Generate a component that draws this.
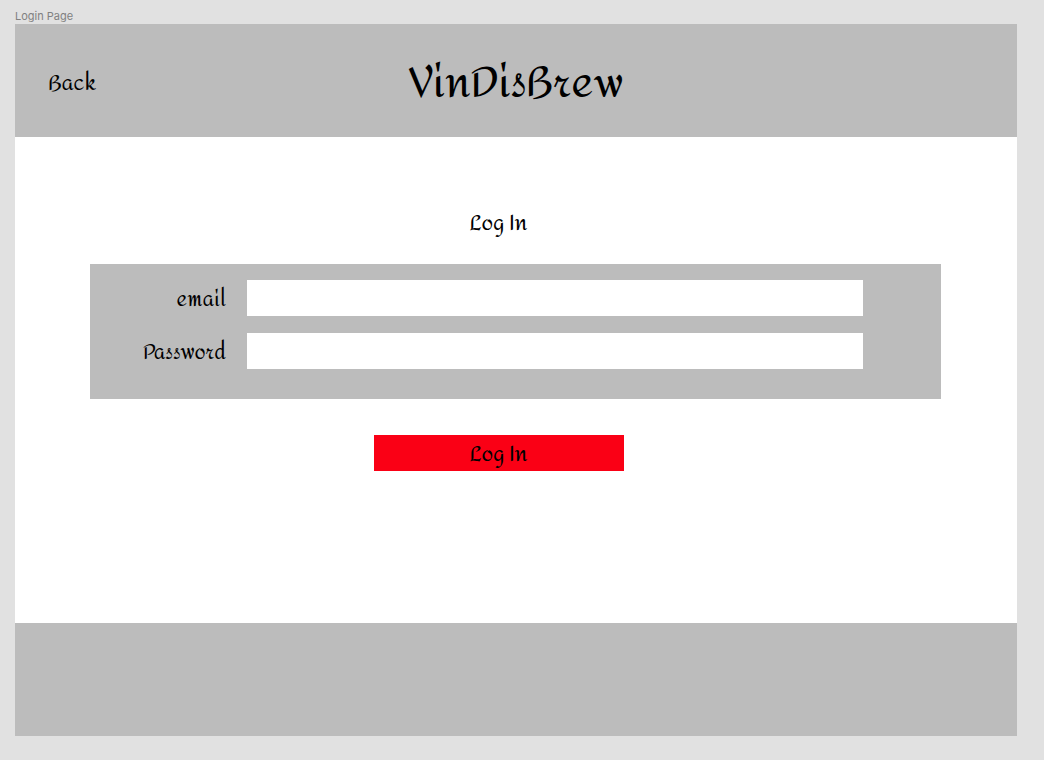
<main class="canvas">
  <p class="frame-name">Login Page</p>
  <div class="page">
    <header>
      <a class="back" href="#back">Back</a>
      <h1>VinDisBrew</h1>
    </header>
    <form onsubmit={(e) => e.preventDefault()}>
      <h2>Log In</h2>
      <div class="fields">
        <label for="email">email</label>
        <input id="email" type="email" />
        <label for="password">Password</label>
        <input id="password" type="password" />
      </div>
      <button type="submit">Log In</button>
    </form>
    <footer></footer>
  </div>
</main>

<style>
  :global(body) {
    margin: 0;
    background: #e1e1e1;
  }
  .canvas {
    box-sizing: border-box;
    min-height: 100vh;
    padding: 8px 27px 24px 15px;
    display: flex;
    flex-direction: column;
    color: #000;
    font-family: "Amita", "Felipa", "Liberation Serif", serif;
    font-size: 21px;
    line-height: 32px;
  }
  .frame-name {
    margin: 0;
    font: 11px/16px Inter, sans-serif;
    color: #808080;
  }
  .page {
    flex: 1;
    display: flex;
    flex-direction: column;
    background: #fff;
  }
  header {
    box-sizing: border-box;
    display: grid;
    grid-template-columns: 1fr auto 1fr;
    align-items: center;
    height: 113px;
    padding-top: 6px;
    background: #bcbcbc;
  }
  .back {
    padding-left: 33px;
    color: inherit;
    text-decoration: none;
  }
  h1 {
    margin: 0;
    font-weight: 400;
    font-size: 42px;
    line-height: 64px;
  }
  form {
    flex: 1;
    display: flex;
    flex-direction: column;
    align-items: center;
    padding: 71px 76px 0 75px;
  }
  h2 {
    margin: 0 34px 24px 0;
    font-weight: 400;
    font-size: 21px;
    line-height: 32px;
  }
  .fields {
    box-sizing: border-box;
    width: 100%;
    display: grid;
    grid-template-columns: 136px 1fr;
    gap: 17px 21px;
    align-items: center;
    padding: 16px 78px 30px 0;
    background: #bcbcbc;
  }
  label {
    padding-top: 4px;
    font-size: 20px;
    text-align: right;
  }
  input {
    box-sizing: border-box;
    width: 100%;
    height: 36px;
    border: 0;
    padding: 0 8px;
    background: #fff;
    font: inherit;
  }
  button {
    width: 250px;
    height: 36px;
    margin: 36px 34px 0 0;
    padding: 4px 0 0;
    border: 0;
    background: #fa0015;
    color: inherit;
    font: inherit;
  }
  footer {
    height: 113px;
    background: #bcbcbc;
  }
</style>
